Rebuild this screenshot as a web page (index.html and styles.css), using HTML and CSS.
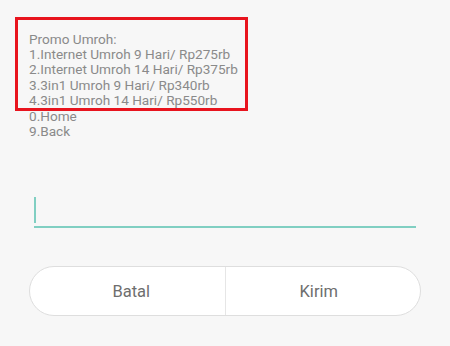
FILE: index.html
```html
<!DOCTYPE html>
<html>
<head>
<meta charset="utf-8">
<link rel="stylesheet" href="styles.css">
</head>
<body>
<div class="screen">
  <div class="message">
    <div class="line">Promo Umroh:</div>
    <div class="line">1.Internet Umroh 9 Hari/ Rp275rb</div>
    <div class="line">2.Internet Umroh 14 Hari/ Rp375rb</div>
    <div class="line">3.3in1 Umroh 9 Hari/ Rp340rb</div>
    <div class="line">4.3in1 Umroh 14 Hari/ Rp550rb</div>
    <div class="line">0.Home</div>
    <div class="line">9.Back</div>
    <div class="highlight"></div>
  </div>
  <div class="field">
    <span class="cursor"></span>
  </div>
  <div class="actions">
    <div class="btn">Batal</div>
    <div class="btn">Kirim</div>
  </div>
</div>
</body>
</html>
```
FILE: styles.css
```css
html, body {
  margin: 0;
  padding: 0;
  background: #f7f7f7;
}
.screen {
  width: 450px;
  height: 346px;
  font-family: Roboto, "Noto Sans", sans-serif;
  display: flex;
  flex-direction: column;
}
.message {
  position: relative;
  padding: 31.5px 0 0 29px;
  color: #8a8a8a;
  font-size: 13.6px;
  line-height: 15.45px;
}
.highlight {
  position: absolute;
  left: 15px;
  top: 17px;
  width: 227px;
  height: 88px;
  border: 3px solid #e8141e;
}
.field {
  margin: 56.4px 34px 0 34px;
  height: 30px;
  border-bottom: 2px solid #80cfc2;
  display: flex;
  align-items: flex-end;
}
.cursor {
  display: block;
  width: 2px;
  height: 26px;
  margin-bottom: 3px;
  background: #80cfc2;
}
.actions {
  margin: 38px 29px 0 29px;
  height: 48px;
  padding: 0 8px;
  border: 1px solid #dedede;
  border-radius: 26px;
  background: #fff;
  display: flex;
}
.btn {
  flex: 1;
  display: flex;
  align-items: center;
  justify-content: center;
  color: #6e6e6e;
  font-size: 16.5px;
}
.btn + .btn {
  border-left: 1px solid #e6e6e6;
}
```
